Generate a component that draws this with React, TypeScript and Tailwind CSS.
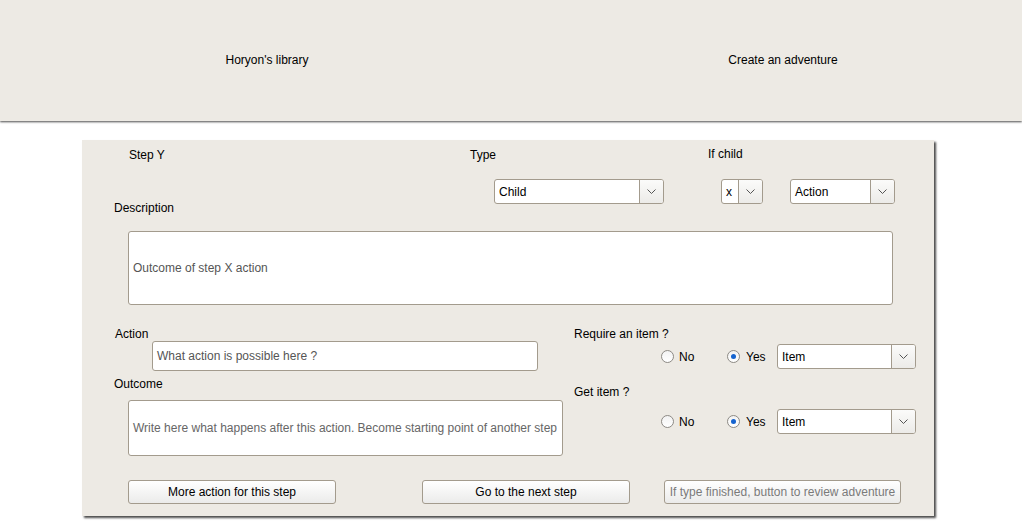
import React from "react";

const font = { fontFamily: '"Liberation Sans", Arial, sans-serif' };

const Chevron = () => (
  <svg width="9" height="5" viewBox="0 0 9 5" className="text-[#555]">
    <path d="M0.5 0.5 L4.5 4.5 L8.5 0.5" fill="none" stroke="currentColor" strokeWidth="1" />
  </svg>
);

interface SelectProps {
  value: string;
  width: string;
  ml?: string;
}

const Select = ({ value, width, ml = "" }: SelectProps) => (
  <div
    className={`${width} ${ml} h-[25px] shrink-0 flex bg-white border border-[#a39b8d] rounded-[3px] overflow-hidden`}
  >
    <div className="flex-1 flex items-center pl-[4px] text-[12px] text-black">{value}</div>
    <div className="w-[24px] flex items-center justify-center border-l border-[#a39b8d] bg-gradient-to-b from-[#fbfbfa] to-[#ecebe8]">
      <Chevron />
    </div>
  </div>
);

const Radio = ({ checked }: { checked?: boolean }) => (
  <span className="w-[13px] h-[13px] shrink-0 rounded-full border border-[#8d8a85] bg-gradient-to-b from-[#f2f2f2] to-white flex items-center justify-center">
    {checked && <span className="w-[5px] h-[5px] rounded-full bg-[#1563cf]" />}
  </span>
);

const ItemRow = ({ ml }: { ml: string }) => (
  <div className={`flex items-center ${ml}`}>
    <div className="ml-[87px] w-[66px] flex items-center gap-[5px]">
      <Radio />
      <span>No</span>
    </div>
    <div className="w-[50px] flex items-center gap-[6px]">
      <Radio checked />
      <span>Yes</span>
    </div>
    <Select value="Item" width="w-[139px]" />
  </div>
);

const Button = ({ label, width, muted }: { label: string; width: string; muted?: boolean }) => (
  <button
    className={`${width} h-[24px] shrink-0 border border-[#a39b8d] rounded-[3px] bg-gradient-to-b from-white to-[#ebebea] text-[12px] ${
      muted ? "text-[#7a7a7a]" : "text-black"
    }`}
  >
    {label}
  </button>
);

export default function App() {
  return (
    <div className="min-h-screen bg-white text-[12px] leading-[14px] text-black" style={font}>
      <header className="h-[121px] bg-[#edeae4] flex items-center overflow-hidden pl-[9px] shadow-[0_1px_2px_rgba(0,0,0,0.7)]">
        <div className="w-[516px] shrink-0 flex justify-center -mt-[1px]">Horyon's library</div>
        <div className="w-[516px] shrink-0 flex justify-center -mt-[1px]">Create an adventure</div>
      </header>

      <div className="ml-[82px] mt-[19px] w-[852px] bg-[#edeae4] pt-[8px] pb-[12px] shadow-[2px_2px_2px_rgba(0,0,0,0.7)]">
        {/* labels */}
        <div className="flex h-[14px]">
          <span className="ml-[47px] w-[341px]">Step Y</span>
          <span className="w-[238px]">Type</span>
          <span className="-mt-[1px]">If child</span>
        </div>

        {/* description + selects */}
        <div className="flex items-start mt-[17px]">
          <span className="ml-[32px] w-[380px] mt-[22px]">Description</span>
          <Select value="Child" width="w-[170px]" />
          <Select value="x" width="w-[42px]" ml="ml-[57px]" />
          <Select value="Action" width="w-[105px]" ml="ml-[27px]" />
        </div>

        <div className="ml-[46px] mt-[16px] w-[765px] h-[74px] bg-white border border-[#a39b8d] rounded-[3px] flex items-center pl-[4px] text-[#555]">
          Outcome of step X action
        </div>

        {/* action / outcome + items */}
        <div className="flex mt-[22px]">
          <div className="ml-[32px] w-[449px] flex flex-col">
            <span className="ml-[1px]">Action</span>
            <div className="ml-[38px] w-[386px] h-[30px] bg-white border border-[#a39b8d] rounded-[3px] flex items-center pl-[4px] text-[#555]">
              What action is possible here ?
            </div>
            <span className="mt-[6px]">Outcome</span>
            <div className="ml-[14px] mt-[9px] w-[435px] h-[56px] bg-white border border-[#a39b8d] rounded-[3px] flex items-center pl-[4px] text-[#666]">
              Write here what happens after this action. Become starting point of another step
            </div>
          </div>

          <div className="ml-[11px] flex flex-col">
            <span>Require an item ?</span>
            <ItemRow ml="mt-[3px]" />
            <span className="mt-[16px]">Get item ?</span>
            <ItemRow ml="mt-[10px]" />
          </div>
        </div>

        {/* buttons */}
        <div className="flex mt-[24px]">
          <div className="ml-[46px]">
            <Button label="More action for this step" width="w-[208px]" />
          </div>
          <div className="ml-[86px]">
            <Button label="Go to the next step" width="w-[208px]" />
          </div>
          <div className="ml-[34px]">
            <Button label="If type finished, button to review adventure" width="w-[237px]" muted />
          </div>
        </div>
      </div>
    </div>
  );
}
